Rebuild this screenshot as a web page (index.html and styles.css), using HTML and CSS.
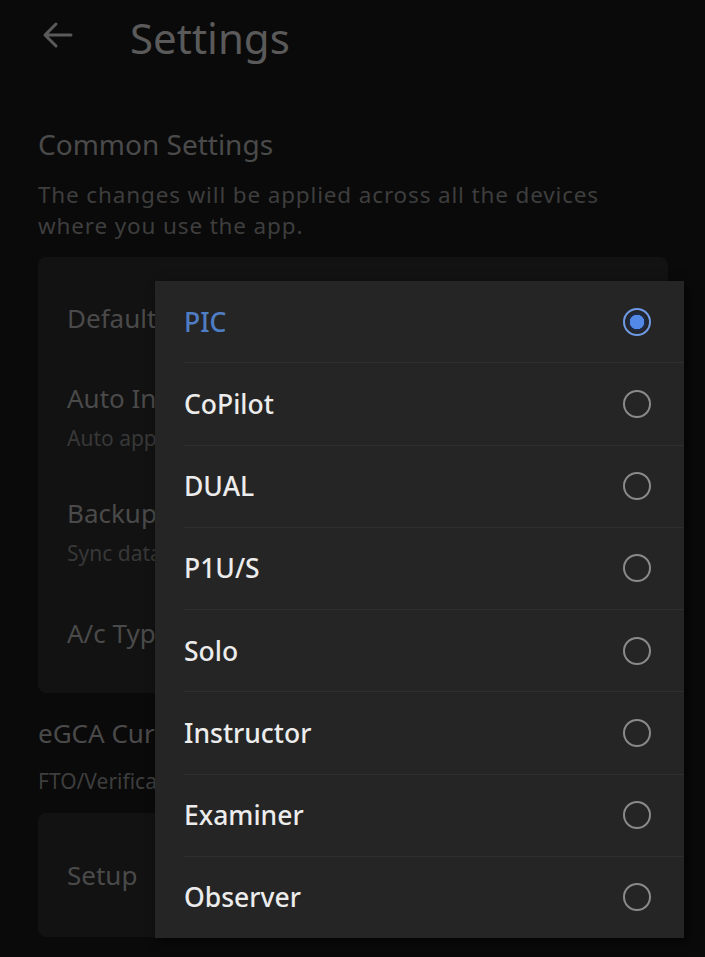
FILE: index.html
```html
<!DOCTYPE html>
<html>
<head>
<meta charset="utf-8">
<link rel="stylesheet" href="styles.css">
</head>
<body>
<div class="page">
  <header class="topbar">
    <svg class="back" width="32" height="28" viewBox="0 0 32 28"><path d="M29 14H4M14 3L3 14L14 25" fill="none" stroke="#5a5a5a" stroke-width="3" stroke-linecap="round" stroke-linejoin="round"/></svg>
    <h1 class="title">Settings</h1>
  </header>
  <section class="section">
    <h2 class="sec-title">Common Settings</h2>
    <p class="sec-desc">The changes will be applied across all the devices where you use the app.</p>
    <div class="card">
      <div class="row"><div class="row-title single">Default Role</div></div>
      <div class="row"><div class="row-title">Auto Increment</div><div class="row-sub">Auto apply</div></div>
      <div class="row"><div class="row-title">Backup</div><div class="row-sub">Sync data</div></div>
      <div class="row last-row"><div class="row-title single">A/c Type</div></div>
    </div>
    <h2 class="sec-title2">eGCA Currency</h2>
    <p class="sec-desc2">FTO/Verification</p>
    <div class="card card2">
      <div class="row-title single">Setup</div>
    </div>
  </section>
</div>
<div class="menu">
  <div class="opt selected"><span>PIC</span><span class="radio on"></span></div>
  <div class="opt"><span>CoPilot</span><span class="radio"></span></div>
  <div class="opt"><span>DUAL</span><span class="radio"></span></div>
  <div class="opt"><span>P1U/S</span><span class="radio"></span></div>
  <div class="opt"><span>Solo</span><span class="radio"></span></div>
  <div class="opt"><span>Instructor</span><span class="radio"></span></div>
  <div class="opt"><span>Examiner</span><span class="radio"></span></div>
  <div class="opt last"><span>Observer</span><span class="radio"></span></div>
</div>
</body>
</html>
```
FILE: styles.css
```css
* { box-sizing: border-box; }
html, body { margin: 0; padding: 0; }
body {
  background: #0a0a0a;
  font-family: "Noto Sans", "Open Sans", sans-serif;
  width: 705px;
  height: 957px;
  overflow: hidden;
  position: relative;
}
.page { padding: 0 37px 0 38px; }
.topbar {
  height: 80px;
  display: flex;
  align-items: center;
  padding-bottom: 10px;
}
.back { margin-left: 4px; }
.title {
  margin: 6px 0 0 56px;
  font-size: 42px;
  font-weight: 400;
  color: #5a5a5a;
  line-height: 50px;
}
.sec-title {
  margin: 44px 0 0;
  font-size: 28px;
  font-weight: 400;
  color: #4a4a4a;
  line-height: 40px;
}
.sec-desc {
  margin: 15px 0 0;
  font-size: 22.5px;
  letter-spacing: 0.85px;
  color: #3e3e3e;
  line-height: 31px;
  width: 600px;
}
.card {
  margin-top: 16px;
  background: #121212;
  border-radius: 8px;
  padding: 41px 29px 40px;
  display: flex;
  flex-direction: column;
  gap: 42px;
}
.row { display: flex; flex-direction: column; }
.last-row { margin-top: 3px; }
.row-title {
  font-size: 26px;
  color: #4a4a4a;
  line-height: 36px;
  white-space: nowrap;
}
.row-title.single { line-height: 40px; }
.row-sub {
  margin-top: 7px;
  font-size: 21px;
  color: #383838;
  line-height: 30px;
  white-space: nowrap;
}
.sec-title2 {
  margin: 22px 0 0;
  font-size: 26px;
  font-weight: 400;
  color: #4a4a4a;
  line-height: 36px;
  white-space: nowrap;
}
.sec-desc2 {
  margin: 15px 0 0;
  font-size: 21px;
  color: #3e3e3e;
  line-height: 30px;
  white-space: nowrap;
}
.card2 {
  margin-top: 17px;
  height: 124px;
  padding: 0 29px;
  justify-content: center;
}
.menu {
  position: absolute;
  left: 155px;
  top: 281px;
  width: 529px;
  height: 657px;
  background: #252525;
  box-shadow: 4px 4px 10px rgba(0,0,0,0.6);
  display: flex;
  flex-direction: column;
  padding-left: 29px;
}
.opt {
  flex: 1;
  display: flex;
  align-items: center;
  justify-content: space-between;
  padding-right: 33px;
  border-bottom: 1px solid #2f2f2f;
  font-size: 26.5px;
  font-weight: 500;
  color: #ececec;
}
.opt.last { border-bottom: none; }
.opt.selected { color: #4f7dc4; }
.radio {
  width: 28px;
  height: 28px;
  border-radius: 50%;
  border: 2.5px solid #8a8a8a;
}
.radio.on {
  border-color: #6e9ae6;
  background: radial-gradient(circle, #5289e6 0 7px, #1e2a44 7.5px 9.5px, transparent 10px);
}
```
